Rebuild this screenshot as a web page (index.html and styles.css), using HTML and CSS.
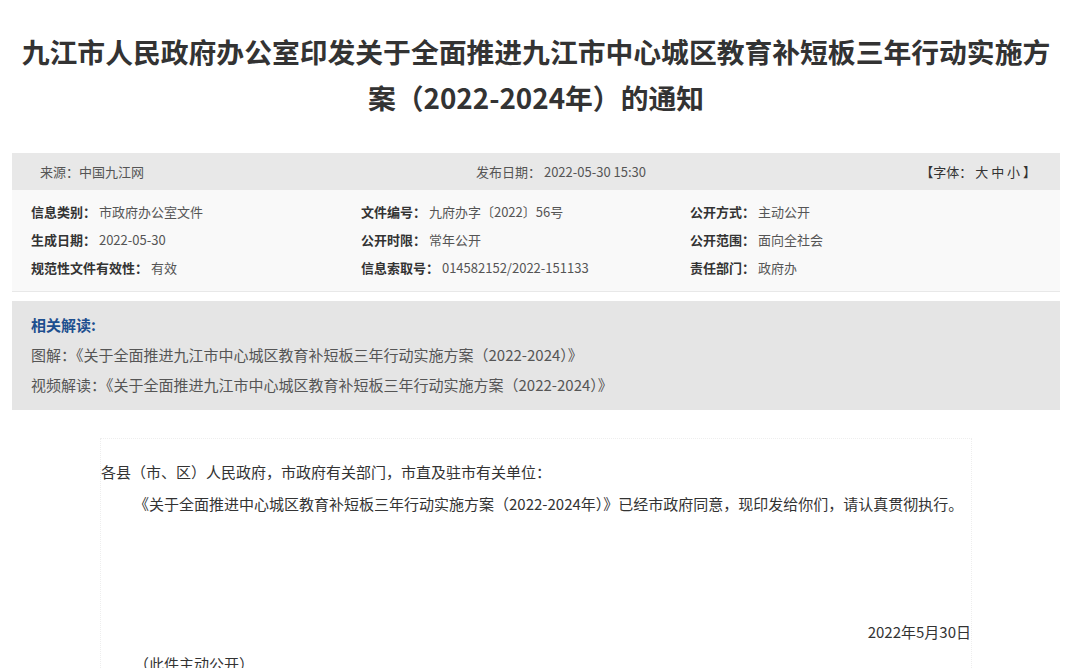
FILE: index.html
```html
<!DOCTYPE html>
<html lang="zh-CN">
<head>
    <meta charset="UTF-8">
    <meta name="viewport" content="width=device-width, initial-scale=1.0">
    <title>九江市人民政府办公室印发关于全面推进九江市中心城区教育补短板三年行动实施方案（2022-2024年）的通知</title>
    <link rel="stylesheet" href="styles.css">
</head>
<body>
    <div class="page">
        <h1 class="title">九江市人民政府办公室印发关于全面推进九江市中心城区教育补短板三年行动实施方案（2022-2024年）的通知</h1>

        <div class="meta-bar">
            <div class="meta-source">来源：中国九江网</div>
            <div class="meta-date">发布日期： 2022-05-30 15:30</div>
            <div class="meta-font">【字体： <a href="#">大</a> <a href="#">中</a> <a href="#">小</a> 】</div>
        </div>

        <div class="info-grid">
            <div class="info-item"><b>信息类别：</b> 市政府办公室文件</div>
            <div class="info-item"><b>文件编号：</b> 九府办字〔2022〕56号</div>
            <div class="info-item"><b>公开方式：</b> 主动公开</div>
            <div class="info-item"><b>生成日期：</b> 2022-05-30</div>
            <div class="info-item"><b>公开时限：</b> 常年公开</div>
            <div class="info-item"><b>公开范围：</b> 面向全社会</div>
            <div class="info-item"><b>规范性文件有效性：</b> 有效</div>
            <div class="info-item"><b>信息索取号：</b> 014582152/2022-151133</div>
            <div class="info-item"><b>责任部门：</b> 政府办</div>
        </div>

        <div class="related">
            <div class="related-title">相关解读:</div>
            <div class="related-line">图解：<a href="#">《关于全面推进九江市中心城区教育补短板三年行动实施方案（2022-2024）》</a></div>
            <div class="related-line">视频解读：<a href="#">《关于全面推进九江市中心城区教育补短板三年行动实施方案（2022-2024）》</a></div>
        </div>

        <div class="article">
            <p>各县（市、区）人民政府，市政府有关部门，市直及驻市有关单位：</p>
            <p class="indent">《关于全面推进中心城区教育补短板三年行动实施方案（2022-2024年）》已经市政府同意，现印发给你们，请认真贯彻执行。</p>
            <p>&nbsp;</p>
            <p>&nbsp;</p>
            <p>&nbsp;</p>
            <p class="sign">2022年5月30日</p>
            <p class="indent">（此件主动公开）</p>
        </div>
    </div>
</body>
</html>
```

FILE: styles.css
```css
body {
    margin: 0;
    background: #ffffff;
    color: #333333;
    font-family: "Noto Sans CJK SC", "Noto Sans", sans-serif;
}

a {
    color: inherit;
    text-decoration: none;
}

.page {
    width: 1048px;
    margin-left: 12px;
}

.title {
    margin: 0;
    padding-top: 28px;
    font-size: 27.8px;
    line-height: 46px;
    font-weight: bold;
    text-align: center;
    color: #333333;
}

.meta-bar {
    display: flex;
    align-items: center;
    height: 37px;
    margin-top: 33px;
    background-color: #e8e8e8;
    font-size: 13px;
    color: #555555;
}

.meta-source {
    width: 436px;
    padding-left: 28px;
}

.meta-date {
    flex: 1;
}

.meta-font {
    padding-right: 24px;
    color: #333333;
}

.info-grid {
    display: grid;
    grid-template-columns: 330px 329px 1fr;
    padding: 8px 0 9px 19px;
    background-color: #f9f9f9;
    border-bottom: 1px solid #e8e8e8;
    font-size: 13px;
    line-height: 28px;
    color: #555555;
}

.info-item b {
    color: #333333;
}

.related {
    margin-top: 9px;
    padding: 9px 19px 10px;
    background-color: #e5e5e5;
    font-size: 15px;
    line-height: 30px;
    color: #555555;
}

.related-title {
    font-weight: bold;
    color: #1d4f8f;
}

.article {
    width: 870px;
    margin: 28px auto 0;
    border: 1px dotted #eeeeee;
    border-bottom: none;
    padding-top: 17px;
    font-size: 15px;
    line-height: 32px;
    color: #333333;
}

.article p {
    margin: 0;
}

.article .indent {
    text-indent: 2.2em;
}

.article .sign {
    text-align: right;
}
```
